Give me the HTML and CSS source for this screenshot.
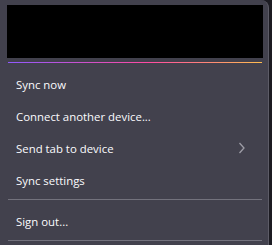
FILE: index.html
```html
<!DOCTYPE html>
<html lang="en">
<head>
    <meta charset="UTF-8">
    <title>Sync menu</title>
    <link rel="stylesheet" href="styles.css">
</head>
<body>
    <div class="panel">
        <div class="account-box"></div>
        <div class="accent-line"></div>

        <div class="menu">
            <div class="menu-item">Sync now</div>
            <div class="menu-item">Connect another device...</div>
            <div class="menu-item">
                <span>Send tab to device</span>
                <svg class="chevron" width="8" height="12" viewBox="0 0 8 12">
                    <path d="M1.5 1 L6 6 L1.5 11" fill="none" stroke="#9d9ca6" stroke-width="1.3"/>
                </svg>
            </div>
            <div class="menu-item">Sync settings</div>
            <div class="separator"></div>
            <div class="menu-item">Sign out...</div>
            <div class="separator"></div>
        </div>
    </div>
</body>
</html>
```

FILE: styles.css
```css
:root {
    --panel-bg: #42414d;
    --text-color: #fbfbfe;
    --border-color: #5d5c67;
    --separator: #73727d;
}

html, body {
    height: 100%;
}

body {
    margin: 0;
    background-color: #1c1b22;
    font-family: 'Open Sans', 'Noto Sans', sans-serif;
    overflow: hidden;
}

.panel {
    box-sizing: border-box;
    width: 269px;
    min-height: 100%;
    padding-top: 5px;
    background-color: var(--panel-bg);
    border-right: 1px solid var(--border-color);
    border-top-right-radius: 8px;
}

.account-box {
    width: 256px;
    height: 53px;
    margin-left: 7px;
    background-color: #000000;
}

.accent-line {
    height: 1px;
    margin: 4px 6px 0 8px;
    background: linear-gradient(to right, #9059ff, #ff4aa2 55%, #ffbd4f);
}

.menu {
    padding-top: 5px;
}

.menu-item {
    display: flex;
    align-items: center;
    justify-content: space-between;
    height: 32px;
    padding: 0 22px 0 16px;
    color: var(--text-color);
    font-size: 11.4px;
}

.chevron {
    display: block;
}

.separator {
    height: 1px;
    margin: 3px 6px 5px 8px;
    background-color: var(--separator);
}
```
